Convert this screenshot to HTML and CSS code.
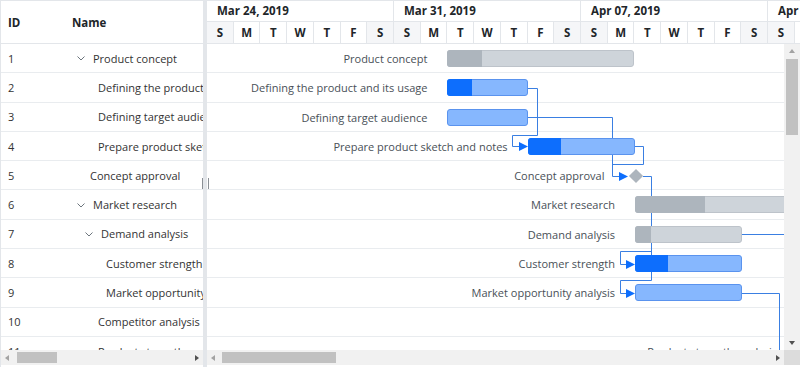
FILE: index.html
```html
<!DOCTYPE html>
<html>
<head>
<meta charset="utf-8">
<link rel="stylesheet" href="styles.css">
</head>
<body>
<div class="gantt">
  <div class="grid-pane">
    <div class="grid-header">
      <div class="col-id">ID</div>
      <div class="col-name">Name</div>
    </div>
    <div class="grid-body">
      <div class="grow"><div class="col-id">1</div><div class="col-name lvl0"><span class="exp"><svg width="8" height="5" viewBox="0 0 8 5"><polyline points="0.5,0.5 4,4 7.5,0.5" fill="none" stroke="#6c757d" stroke-width="1"/></svg></span>Product concept</div></div>
      <div class="grow"><div class="col-id">2</div><div class="col-name lvl1"><span class="leaf"></span>Defining the product and its usage</div></div>
      <div class="grow"><div class="col-id">3</div><div class="col-name lvl1"><span class="leaf"></span>Defining target audience</div></div>
      <div class="grow"><div class="col-id">4</div><div class="col-name lvl1"><span class="leaf"></span>Prepare product sketch and notes</div></div>
      <div class="grow"><div class="col-id">5</div><div class="col-name lvl0"><span class="leaf"></span>Concept approval</div></div>
      <div class="grow"><div class="col-id">6</div><div class="col-name lvl0"><span class="exp"><svg width="8" height="5" viewBox="0 0 8 5"><polyline points="0.5,0.5 4,4 7.5,0.5" fill="none" stroke="#6c757d" stroke-width="1"/></svg></span>Market research</div></div>
      <div class="grow"><div class="col-id">7</div><div class="col-name lvl1"><span class="exp"><svg width="8" height="5" viewBox="0 0 8 5"><polyline points="0.5,0.5 4,4 7.5,0.5" fill="none" stroke="#6c757d" stroke-width="1"/></svg></span>Demand analysis</div></div>
      <div class="grow"><div class="col-id">8</div><div class="col-name lvl2"><span class="leaf"></span>Customer strength</div></div>
      <div class="grow"><div class="col-id">9</div><div class="col-name lvl2"><span class="leaf"></span>Market opportunity analysis</div></div>
      <div class="grow"><div class="col-id">10</div><div class="col-name lvl1"><span class="leaf"></span>Competitor analysis</div></div>
      <div class="grow"><div class="col-id">11</div><div class="col-name lvl1"><span class="leaf"></span>Product strength analysis</div></div>
    </div>
    <div class="hscroll">
      <span class="arr arr-left off"></span>
      <div class="track"><div class="thumb thumb-grid"></div></div>
      <span class="arr arr-right"></span>
    </div>
  </div>

  <div class="splitter"><span class="grip"></span></div>

  <div class="chart-pane">
    <div class="tl-header">
      <div class="week">
        <div class="month">Mar 24, 2019</div>
        <div class="days"><span class="we">S</span><span>M</span><span>T</span><span>W</span><span>T</span><span>F</span><span class="we">S</span></div>
      </div>
      <div class="week">
        <div class="month">Mar 31, 2019</div>
        <div class="days"><span class="we">S</span><span>M</span><span>T</span><span>W</span><span>T</span><span>F</span><span class="we">S</span></div>
      </div>
      <div class="week">
        <div class="month">Apr 07, 2019</div>
        <div class="days"><span class="we">S</span><span>M</span><span>T</span><span>W</span><span>T</span><span>F</span><span class="we">S</span></div>
      </div>
      <div class="week">
        <div class="month">Apr 14, 2019</div>
        <div class="days"><span class="we">S</span><span>M</span><span>T</span><span>W</span><span>T</span><span>F</span><span class="we">S</span></div>
      </div>
    </div>

    <div class="chart-main">
      <div class="chart-view">
        <div class="canvas">
          <div class="crow">
            <div class="bar summary" style="left:240.4px;width:187px"><div class="prog" style="width:35px"></div><span class="lbl">Product concept</span></div>
          </div>
          <div class="crow">
            <div class="bar task" style="left:240.4px;width:80.2px"><div class="prog" style="width:25px"></div><span class="lbl">Defining the product and its usage</span></div>
          </div>
          <div class="crow">
            <div class="bar task" style="left:240.4px;width:80.2px"><span class="lbl">Defining target audience</span></div>
          </div>
          <div class="crow">
            <div class="bar task" style="left:320.6px;width:107px"><div class="prog" style="width:33px"></div><span class="lbl">Prepare product sketch and notes</span></div>
          </div>
          <div class="crow">
            <div class="milestone" style="left:421.5px"><span class="diamond"></span><span class="lbl">Concept approval</span></div>
          </div>
          <div class="crow">
            <div class="bar summary" style="left:428px;width:400px"><div class="prog" style="width:70px"></div><span class="lbl">Market research</span></div>
          </div>
          <div class="crow">
            <div class="bar summary" style="left:428px;width:107px"><div class="prog" style="width:16px"></div><span class="lbl">Demand analysis</span></div>
          </div>
          <div class="crow">
            <div class="bar task" style="left:428px;width:107px"><div class="prog" style="width:33px"></div><span class="lbl">Customer strength</span></div>
          </div>
          <div class="crow">
            <div class="bar task" style="left:428px;width:107px"><span class="lbl">Market opportunity analysis</span></div>
          </div>
          <div class="crow"></div>
          <div class="crow">
            <div class="bar task" style="left:590px;width:107px"><span class="lbl">Product strength analysis</span></div>
          </div>

          <svg class="links" width="748" height="330" viewBox="0 0 748 330">
            <g fill="none" stroke="#3a7fe2" stroke-width="1">
              <path d="M321 44.5 H330.5 V91.5 H305.5 V102.5 H313"/>
              <path d="M321 73.5 H405.5 V132.5 H413"/>
              <path d="M428 102.5 H436.5 V120.5 H405.5"/>
              <path d="M436 132.5 H444.5 V207.5 H413.5 V220.5 H420"/>
              <path d="M444.5 207 V236.5 H413.5 V249.5 H420"/>
              <path d="M535 190.5 H600"/>
              <path d="M535 249.5 H572.5 V330"/>
            </g>
            <g fill="#0d6efd">
              <polygon points="312,98 321,102.5 312,107"/>
              <polygon points="412,128 421,132.5 412,137"/>
              <polygon points="419,216 428,220.5 419,225"/>
              <polygon points="419,245 428,249.5 419,254"/>
            </g>
          </svg>
        </div>
      </div>
      <div class="vscroll">
        <span class="arr arr-up off"></span>
        <div class="vtrack"><div class="vthumb"></div></div>
        <span class="arr arr-down"></span>
      </div>
    </div>

    <div class="hscroll-row">
      <div class="hscroll chart-h">
        <span class="arr arr-left off"></span>
        <div class="track"><div class="thumb thumb-chart"></div></div>
        <span class="arr arr-right"></span>
      </div>
      <div class="corner"></div>
    </div>
  </div>
</div>
</body>
</html>
```

FILE: styles.css
```css
* { box-sizing: border-box; margin: 0; padding: 0; }
html, body { width: 800px; height: 367px; overflow: hidden; background: #fff; }
body {
  font-family: "Open Sans", "Noto Sans", "DejaVu Sans", sans-serif;
  font-size: 11px;
  color: #212529;
}

.gantt {
  display: flex;
  width: 800px;
  height: 367px;
  border-top: 1px solid #e3e6ea;
  border-left: 1px solid #e3e6ea;
}

/* ---------- left grid ---------- */
.grid-pane {
  width: 202px;
  flex: none;
  display: flex;
  flex-direction: column;
}
.grid-header {
  height: 43px;
  flex: none;
  display: flex;
  align-items: center;
  border-bottom: 1px solid #e3e6ea;
  font-weight: 700;
  font-size: 11.5px;
}
.grid-body {
  height: 306px;
  flex: none;
  overflow: hidden;
}
.grow {
  height: 29.3px;
  display: flex;
  align-items: center;
  border-bottom: 1px solid #e9ecef;
  white-space: nowrap;
  color: #333;
}
.col-id {
  width: 63px;
  flex: none;
  padding-left: 7px;
}
.col-name {
  flex: 1;
  min-width: 0;
  overflow: hidden;
  white-space: nowrap;
  display: flex;
  align-items: center;
}
.grid-header .col-name { padding-left: 8px; }
.col-name.lvl0 { padding-left: 10px; }
.col-name.lvl1 { padding-left: 18px; }
.col-name.lvl2 { padding-left: 26px; }
.exp {
  width: 19px;
  flex: none;
  display: flex;
  align-items: center;
  padding-left: 3px;
  padding-top: 1px;
}
.leaf { width: 16px; flex: none; }

/* ---------- splitter ---------- */
.splitter {
  width: 4px;
  flex: none;
  background: #e3e6ea;
  position: relative;
}
.grip {
  position: absolute;
  left: -1px;
  top: 177px;
  width: 7px;
  height: 11px;
  border-left: 1px solid #8a8f95;
  border-right: 1px solid #8a8f95;
}

/* ---------- chart pane ---------- */
.chart-pane {
  flex: 1;
  min-width: 0;
  display: flex;
  flex-direction: column;
}
.tl-header {
  height: 43px;
  flex: none;
  display: flex;
  overflow: hidden;
  border-bottom: 1px solid #e3e6ea;
  font-weight: 700;
  font-size: 11.5px;
}
.week {
  width: 187px;
  flex: none;
  display: flex;
  flex-direction: column;
}
.month {
  height: 21px;
  line-height: 20px;
  padding-left: 10px;
  border-bottom: 1px solid #e3e6ea;
  border-right: 1px solid #e3e6ea;
  white-space: nowrap;
  overflow: hidden;
}
.days {
  flex: 1;
  display: flex;
}
.days span {
  flex: 1;
  text-align: center;
  line-height: 21px;
  border-right: 1px solid #e3e6ea;
}
.days span.we { background: #f5f6f8; }

.chart-main {
  height: 306px;
  flex: none;
  display: flex;
}
.chart-view {
  flex: 1;
  min-width: 0;
  overflow: hidden;
}
.canvas {
  position: relative;
  width: 748px;
}
.crow {
  height: 29.3px;
  border-bottom: 1px solid #e9ecef;
  position: relative;
}
.bar {
  position: absolute;
  top: 6px;
  height: 17px;
  border-radius: 3px;
  border: 1px solid;
  z-index: 2;
}
.bar.task { background: #86b7fe; border-color: #5a93ee; }
.bar.summary { background: #ced4da; border-color: #bdc3ca; }
.prog {
  position: absolute;
  left: -1px;
  top: -1px;
  bottom: -1px;
  border-radius: 3px 0 0 3px;
}
.bar.task .prog { background: #0d6efd; }
.bar.summary .prog { background: #adb5bd; }
.lbl {
  position: absolute;
  right: calc(100% + 21px);
  top: -1px;
  line-height: 17px;
  white-space: nowrap;
  color: #495057;
}
.milestone {
  position: absolute;
  top: 7px;
  width: 15px;
  height: 15px;
  z-index: 2;
}
.milestone .diamond {
  position: absolute;
  left: 2.5px;
  top: 2.5px;
  width: 10px;
  height: 10px;
  background: #adb5bd;
  transform: rotate(45deg);
}
.milestone .lbl { right: calc(100% + 24px); top: -1px; }
.links {
  position: absolute;
  left: 0;
  top: 0;
  z-index: 1;
}

/* ---------- scrollbars ---------- */
.vscroll {
  width: 16px;
  flex: none;
  background: #f1f1f1;
  display: flex;
  flex-direction: column;
  align-items: center;
}
.vtrack { flex: 1; width: 100%; padding: 0 2px; }
.vthumb {
  margin-top: 2px;
  height: 76px;
  background: #c1c1c1;
}
.hscroll-row {
  height: 15px;
  flex: none;
  display: flex;
}
.hscroll {
  height: 15px;
  flex: none;
  background: #f1f1f1;
  display: flex;
  align-items: center;
}
.chart-h { flex: 1; }
.track { flex: 1; height: 100%; padding: 2px 0; }
.thumb { height: 100%; background: #c1c1c1; }
.thumb-grid { margin-left: 3px; width: 40px; }
.thumb-chart { margin-left: 2px; width: 114px; }
.corner { width: 16px; flex: none; background: #dcdcdc; }

.arr { width: 0; height: 0; flex: none; }
.arr-left {
  margin: 0 5px 0 4px;
  border-top: 3.5px solid transparent;
  border-bottom: 3.5px solid transparent;
  border-right: 4px solid #505050;
}
.arr-right {
  margin: 0 4px 0 5px;
  border-top: 3.5px solid transparent;
  border-bottom: 3.5px solid transparent;
  border-left: 4px solid #505050;
}
.arr-up {
  margin: 5px 0 4px;
  border-left: 3.5px solid transparent;
  border-right: 3.5px solid transparent;
  border-bottom: 4px solid #505050;
}
.arr-down {
  margin: 4px 0 5px;
  border-left: 3.5px solid transparent;
  border-right: 3.5px solid transparent;
  border-top: 4px solid #505050;
}
.arr-left.off { border-right-color: #a3a3a3; }
.arr-up.off { border-bottom-color: #a3a3a3; }
.grid-pane .hscroll { width: 202px; }
```
